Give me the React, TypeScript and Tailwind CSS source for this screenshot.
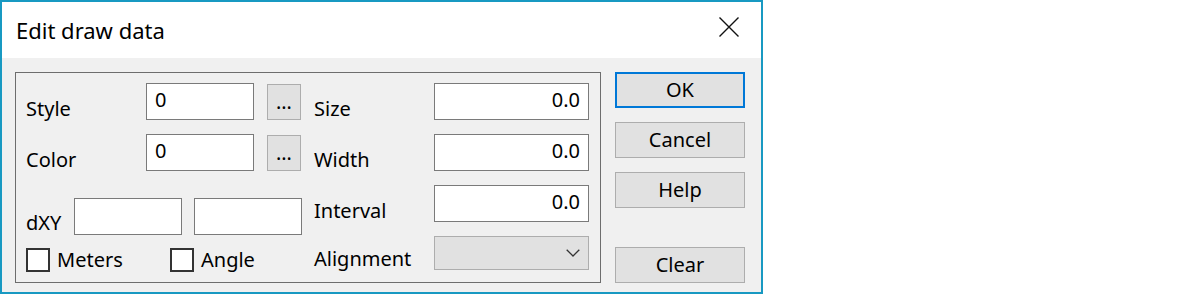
import React from 'react';

function Label({ text, className }: { text: string; className: string }) {
  return <div className={`shrink-0 leading-[24px] ${className}`}>{text}</div>;
}

function Field({ value, width, right }: { value: string; width: string; right?: boolean }) {
  return (
    <input
      readOnly
      value={value}
      aria-label={value || 'value'}
      className={`h-[37px] ${width} shrink-0 border border-[#7a7a7a] bg-white pt-[3px] pb-[8px] leading-[24px] outline-none ${
        right ? 'pr-[8px] text-right' : 'pl-[8px]'
      }`}
    />
  );
}

function DotsButton() {
  return (
    <button
      type="button"
      className="ml-[13px] mt-[1px] flex h-[36px] w-[34px] shrink-0 items-center justify-center border border-[#adadad] bg-[#e1e1e1] leading-[24px]"
    >
      …
    </button>
  );
}

function Check({ label, className }: { label: string; className?: string }) {
  return (
    <div className={`flex items-start ${className ?? ''}`}>
      <span className="h-[24px] w-[24px] shrink-0 border-2 border-[#333333] bg-white" />
      <span className="ml-[7px] leading-[24px]">{label}</span>
    </div>
  );
}

function DlgButton({ text, primary, className }: { text: string; primary?: boolean; className?: string }) {
  return (
    <button
      type="button"
      className={`flex h-[36px] w-[130px] items-center justify-center bg-[#e1e1e1] leading-[24px] ${
        primary ? 'border-2 border-[#0078d7]' : 'border border-[#adadad]'
      } ${className ?? ''}`}
    >
      {text}
    </button>
  );
}

export default function App() {
  return (
    <div className="h-[294px] w-[1200px] bg-white font-['Noto_Sans','Open_Sans',sans-serif] text-[20px] text-black">
      <div className="flex h-[294px] w-[763px] flex-col border-2 border-[#1899c2]">
        {/* title bar */}
        <div className="flex h-[56px] shrink-0 items-start justify-between bg-white">
          <div className="pl-[14px] pt-[13px] text-[22px] leading-[30px]">Edit draw data</div>
          <svg className="mr-[22px] mt-[15px]" width="20" height="20" viewBox="0 0 20 20">
            <path d="M0.5 0.5 L19.5 19.5 M19.5 0.5 L0.5 19.5" stroke="#111" strokeWidth="1.4" fill="none" />
          </svg>
        </div>

        {/* body */}
        <div className="flex flex-1 bg-[#f0f0f0] pl-[13px] pt-[14px]">
          <div className="flex h-[211px] w-[586px] shrink-0 border border-[#6d6d6d] pl-[10px] pt-[10px]">
            <div className="flex w-[276px] flex-col">
              <div className="flex items-start">
                <Label text="Style" className="w-[120px] pt-[14px]" />
                <Field value="0" width="w-[108px]" />
                <DotsButton />
              </div>
              <div className="mt-[13px] flex items-start">
                <Label text="Color" className="w-[120px] pt-[14px]" />
                <Field value="0" width="w-[108px]" />
                <DotsButton />
              </div>
              <div className="mt-[26px] flex items-start">
                <Label text="dXY" className="w-[48px] pt-[13px]" />
                <Field value="" width="w-[108px]" />
                <div className="ml-[12px] flex">
                  <Field value="" width="w-[108px]" />
                </div>
              </div>
              <div className="mt-[13px] flex items-start">
                <Check label="Meters" className="w-[144px]" />
                <Check label="Angle" />
              </div>
            </div>

            <div className="ml-[12px] flex flex-col gap-[13px]">
              <div className="flex items-start">
                <Label text="Size" className="w-[120px] pt-[14px]" />
                <Field value="0.0" width="w-[155px]" right />
              </div>
              <div className="flex items-start">
                <Label text="Width" className="w-[120px] pt-[14px]" />
                <Field value="0.0" width="w-[155px]" right />
              </div>
              <div className="flex items-start">
                <Label text="Interval" className="w-[120px] pt-[14px]" />
                <Field value="0.0" width="w-[155px]" right />
              </div>
              <div className="flex items-start">
                <Label text="Alignment" className="w-[120px] pt-[11px]" />
                <div className="flex h-[34px] w-[155px] items-center justify-end border border-[#adadad] bg-[#e1e1e1] pr-[8px]">
                  <svg width="14" height="8" viewBox="0 0 14 8">
                    <path d="M0.7 0.7 L7 7 L13.3 0.7" stroke="#333" strokeWidth="1.3" fill="none" />
                  </svg>
                </div>
              </div>
            </div>
          </div>

          <div className="ml-[14px] flex flex-col">
            <DlgButton text="OK" primary />
            <DlgButton text="Cancel" className="mt-[14px]" />
            <DlgButton text="Help" className="mt-[14px]" />
            <DlgButton text="Clear" className="mt-[39px]" />
          </div>
        </div>
      </div>
    </div>
  );
}
